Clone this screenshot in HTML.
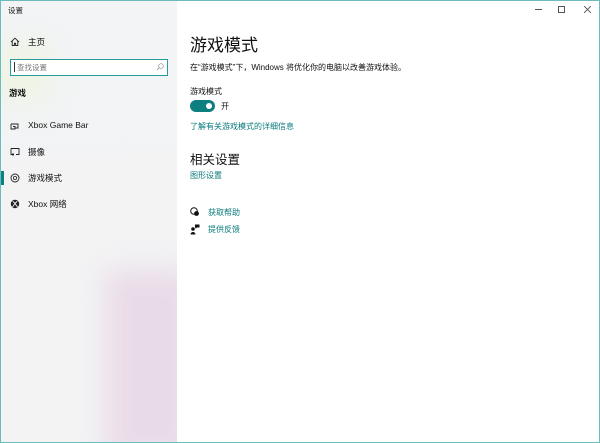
<!DOCTYPE html>
<html><head><meta charset="utf-8"><style>
*{margin:0;padding:0;box-sizing:border-box}
body{width:600px;height:443px;overflow:hidden;font-family:"Liberation Sans","Noto Sans CJK SC",sans-serif;color:#000;background:#fff;position:relative}
.win{position:absolute;left:0;top:0;width:600px;height:443px;border:1px solid #6bbcbc}
.side{position:absolute;left:1px;top:1px;width:176px;height:441px;background:linear-gradient(180deg,#f2f4f6 0%,#f3f3f4 50%,#f3f3f4 100%);overflow:hidden}
.blob{position:absolute;left:105px;top:270px;width:90px;height:190px;background:#e9dae8;filter:blur(14px)}
.blob2{position:absolute;left:-10px;top:40px;width:60px;height:60px;background:#eef4e4;filter:blur(14px)}
.t{position:absolute;font-size:8px}
.nav{position:absolute;left:27px;font-size:8.5px;color:#111}
.ico{position:absolute;left:9px;width:10px;height:10px}
.search{position:absolute;left:9px;top:58px;width:158px;height:17px;border:1.5px solid #2a9a9a;background:#fff}
.main .h{position:absolute;left:190px;font-size:17px;color:#111}
.link{color:#08797d;font-size:8px;position:absolute;left:190px}
</style></head><body>
<div class="side"><div class="blob"></div><div class="blob2"></div>
<div class="t" style="left:7px;top:4px;font-size:7.5px;color:#222">设置</div>
<svg class="ico" style="top:36px" viewBox="0 0 10 10"><path d="M1 5L5 1.2 9 5M2.2 4v4.5h2.2V6.2h1.2v2.3h2.2V4" fill="none" stroke="#222" stroke-width="0.9"/></svg>
<div class="nav" style="top:35px">主页</div>
<div class="search"><div style="position:absolute;left:3px;top:2px;width:1px;height:10px;background:#333"></div><div style="position:absolute;left:6px;top:2px;font-size:7.5px;color:#777">查找设置</div>
<svg style="position:absolute;right:3px;top:3px" width="8" height="8" viewBox="0 0 8 8"><circle cx="5" cy="3" r="2.3" fill="none" stroke="#888" stroke-width="0.7"/><path d="M3.3 4.7L1 7" stroke="#888" stroke-width="0.7"/></svg></div>
<div class="nav" style="left:8px;top:86px;font-weight:bold;font-size:8.5px">游戏</div>
<svg class="ico" style="top:120px" viewBox="0 0 10 10"><path d="M1 3h7v4H5.5M1 3v5h4M3 5.5h2v3" fill="none" stroke="#222" stroke-width="0.9"/></svg>
<div class="nav" style="top:119px">Xbox Game Bar</div>
<svg class="ico" style="top:146px" viewBox="0 0 10 10"><path d="M1 1.5h8v6H6M1 1.5v6h3M3 6v3" fill="none" stroke="#222" stroke-width="0.9"/></svg>
<div class="nav" style="top:145px">摄像</div>
<div style="position:absolute;left:0;top:170px;width:3px;height:14px;background:#0d8080"></div>
<svg class="ico" style="top:172px" viewBox="0 0 10 10"><circle cx="5" cy="5" r="4" fill="none" stroke="#222" stroke-width="0.9"/><circle cx="5" cy="5" r="1.6" fill="none" stroke="#222" stroke-width="0.8"/></svg>
<div class="nav" style="top:171px">游戏模式</div>
<svg class="ico" style="top:198px" viewBox="0 0 10 10"><circle cx="5" cy="5" r="4.2" fill="#222"/><path d="M2.5 8L5 4.5 7.5 8M2.8 2.3L5 4.5 7.2 2.3" stroke="#fff" stroke-width="0.9" fill="none"/></svg>
<div class="nav" style="top:197px">Xbox 网络</div>
</div>
<div class="main">
<div style="position:absolute;left:535px;top:9px;width:7px;height:1px;background:#555"></div>
<div style="position:absolute;left:558px;top:6px;width:7px;height:7px;border:1px solid #555"></div>
<svg style="position:absolute;left:584px;top:6px" width="7" height="7" viewBox="0 0 7 7"><path d="M0 0L7 7M7 0L0 7" stroke="#555" stroke-width="0.9"/></svg>
<div class="h" style="top:31px">游戏模式</div>
<div class="t" style="left:190px;top:62px;color:#111">在“游戏模式”下，Windows 将优化你的电脑以改善游戏体验。</div>
<div class="t" style="left:190px;top:86px;color:#111">游戏模式</div>
<div style="position:absolute;left:190px;top:100px;width:25px;height:12px;border-radius:6px;background:#0d7f80"><div style="position:absolute;right:3px;top:3px;width:6px;height:6px;border-radius:3px;background:#fff"></div></div>
<div class="t" style="left:221px;top:101px;color:#111">开</div>
<div class="link" style="top:121px">了解有关游戏模式的详细信息</div>
<div class="h" style="top:149px;font-size:12.5px">相关设置</div>
<div class="link" style="top:170px">图形设置</div>
<svg style="position:absolute;left:190px;top:207px" width="10" height="10" viewBox="0 0 10 10"><circle cx="4" cy="4" r="3.3" fill="none" stroke="#111" stroke-width="1"/><circle cx="6.5" cy="6.5" r="2.4" fill="#111"/></svg>
<div class="link" style="left:208px;top:207px">获取帮助</div>
<svg style="position:absolute;left:190px;top:224px" width="10" height="11" viewBox="0 0 10 11"><circle cx="3" cy="5" r="1.8" fill="#111"/><path d="M0.5 10.5a2.5 2.5 0 0 1 5 0z" fill="#111"/><path d="M5 0.5h4.5v3H7l-1.5 1.2V3.5H5z" fill="#111"/></svg>
<div class="link" style="left:208px;top:224px">提供反馈</div>
</div>
<div class="win"></div>
</body></html>
